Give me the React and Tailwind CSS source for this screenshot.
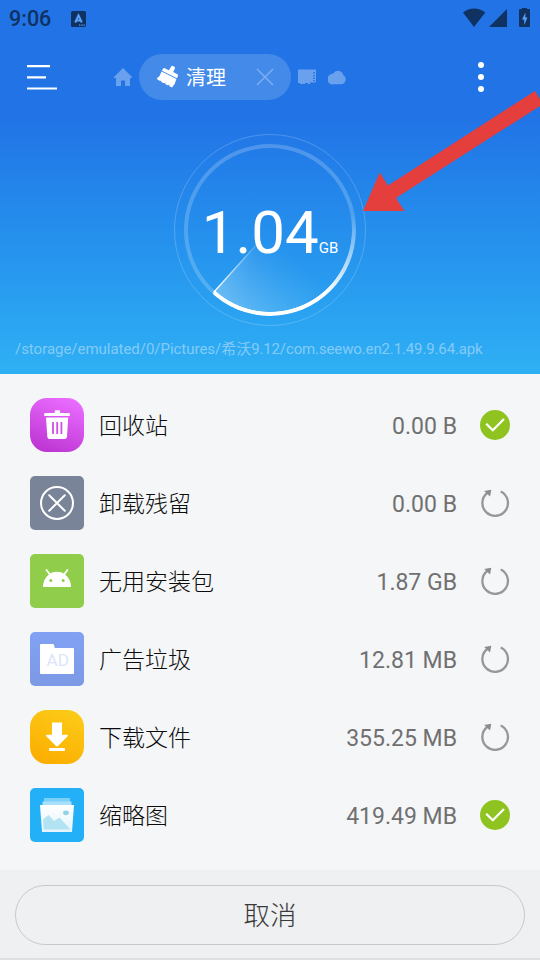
import React from 'react';

const HomeIcon = () => (
  <svg width="18" height="18" viewBox="0 0 18 18" fill="#6aa1ef">
    <path d="M9 0 L18 9 V10 H16 V18 H11 V12.500 H7 V18 H2 V10 H0 V9 Z" />
  </svg>
);

const BroomIcon = () => (
  <svg width="24" height="24" viewBox="0 0 24 24" fill="#fff">
    <path d="M15.200 1.600 q.6-1.100 1.700-.6 l1.500.7 q1 .6 .5 1.700 L17.200 7 L21.400 9.300 q1 .6 .5 1.600 L20.900 13.200 L6 5.800 L7 3.800 q.6-1.100 1.600-.6 L13 5.200 Z" />
    <path d="M5.600 6.600 L20.400 14 Q19.400 18.800 16 22.600 L13 21 L13.600 19.500 L11.800 20.300 L9 18.900 L9.600 17.400 L7.800 18.300 L5 16.800 L5.500 15.400 L4 16 L0.600 13.800 Q4.400 11.200 5.600 6.600 Z" />
  </svg>
);

const SdCardIcon = () => (
  <svg width="18" height="16" viewBox="0 0 18 16">
    <path d="M1 0.5 H17 q1 0 1 1 V12 q0 1.5 -1.5 1.5 H12 V15 H10 V14 H7 V15 H2 V14 H0 V1.5 Q0 .5 1 .5 Z" fill="#6aa1ef" />
    <path d="M15 3h2v1.5h-2z M15 6h2v1.3h-2z M15 8.6h2v1.3h-2z M15 11h2v1h-2z" fill="#2f7ae7" />
  </svg>
);

const CloudIcon = () => (
  <svg width="18" height="16" viewBox="0 0 18 16">
    <path d="M5.5 15.3 A5.2 5.2 0 0 1 3.7 5 A3 3 0 0 1 5.6 4.2 A5.3 5.3 0 0 1 15.2 6 A5 5 0 0 1 13 15.3 Z" fill="#6aa1ef" />
  </svg>
);

const StatusBar = () => (
  <div className="flex h-9 items-center pl-[9px] pr-[9px] text-[#0f3262]">
    <span className="w-[62px] pt-px text-[21.5px] leading-9 font-medium">9:06</span>
    <svg className="mt-px" width="15" height="16" viewBox="0 0 15 16">
      <rect width="15" height="16" rx="1.5" fill="#0f3262" />
      <path d="M4.2 11.500 L7.5 4.300 L10.8 11.500 M5.4 9.400 H9.6" stroke="#5ba0f8" strokeWidth="2" fill="none" />
      <path d="M8 13.6h1.3v1.2h-1.3z M10.3 13.6h1.3v1.2h-1.3z M12.5 13.6h1.3v1.2h-1.3z" fill="#5ba0f8" />
    </svg>
    <div className="ml-auto flex items-center">
      <svg width="68" height="20" viewBox="0 0 68 20" fill="#0f3262">
        <path d="M11 19 L0 4.500 Q5 0.500 11 0.500 T22.300 4.500 Z" />
        <path d="M44 1 V19 H26 Z" />
        <path d="M59 -1h5v2h2q1 0 1 1v16q0 1-1 1h-9q-1 0-1-1V2q0-1 1-1h2z" />
        <path d="M62.500 4.600 L59 11.500 H61.2 V17 L64.500 9.600 H62.3 Z" fill="#5ba0f8" />
      </svg>
    </div>
  </div>
);

const TopBar = () => (
  <div className="flex h-[82px] items-center px-[27px]">
    <svg className="mt-px" width="30" height="26" viewBox="0 0 30 26" fill="#fff">
      <path d="M0 0h23v2.2H0z M0 11.2h19v2.2H0z M0 22.4h30v2.2H0z" />
    </svg>
    <div className="ml-[57px]">
      <HomeIcon />
    </div>
    <div className="ml-[7px] flex h-[46px] w-[152px] items-center rounded-full bg-[#448ae9] pl-[17px] pr-[17px]">
      <BroomIcon />
      <span className="ml-[6px] pt-0.5 text-[20px] leading-none text-white">清理</span>
      <svg className="ml-auto" width="18" height="18" viewBox="0 0 18 18">
        <path d="M1 1 L17 17 M17 1 L1 17" stroke="#7fb0f2" strokeWidth="1.4" />
      </svg>
    </div>
    <div className="ml-[7px]">
      <SdCardIcon />
    </div>
    <div className="ml-3">
      <CloudIcon />
    </div>
    <svg className="ml-auto mr-[29px]" width="6" height="30" viewBox="0 0 6 30" fill="#fff">
      <circle cx="3" cy="3" r="3" />
      <circle cx="3" cy="15" r="3" />
      <circle cx="3" cy="27" r="3" />
    </svg>
  </div>
);

const Gauge = () => (
  <div className="mx-auto mt-4 grid h-48 w-48 place-items-center *:col-start-1 *:row-start-1">
    <div className="h-48 w-48 rounded-full border-[1.5px] border-white/20" />
    <div className="h-[172px] w-[172px] rounded-full border-[4.5px] border-white/20" />
    <div className="h-[168px] w-[168px] rounded-full bg-[conic-gradient(transparent_135deg,rgba(255,255,255,0.32)_222deg,transparent_222deg)] [mask-image:radial-gradient(circle,transparent_10%,black_70%)]" />
    <div className="h-[172px] w-[172px] rounded-full bg-[conic-gradient(transparent_80deg,white_140deg,white_222deg,transparent_222deg)] [mask-image:radial-gradient(circle_closest-side,transparent_81.5px,black_82.2px)]" />
    <svg width="192" height="192" viewBox="0 0 192 192">
      <defs>
        <linearGradient id="hand" gradientUnits="userSpaceOnUse" x1="40" y1="158" x2="84" y2="109">
          <stop offset="0" stopColor="#fff" />
          <stop offset="1" stopColor="#fff" stopOpacity="0.1" />
        </linearGradient>
      </defs>
      <path d="M39.5 158.5 L84 109" stroke="url(#hand)" strokeWidth="1.4" />
    </svg>
    <div className="flex items-baseline pt-[6px] text-white">
      <span className="text-[60px] leading-none">1.04</span>
      <span className="text-[15px] leading-none">GB</span>
    </div>
  </div>
);

const Tile = ({ children }) => (
  <svg width="54" height="54" viewBox="0 0 54 54">{children}</svg>
);

const TrashTile = () => (
  <Tile>
    <defs>
      <linearGradient id="purple" x1="0.7" y1="0" x2="0.3" y2="1">
        <stop offset="0" stopColor="#ea6cff" />
        <stop offset="1" stopColor="#bd35d3" />
      </linearGradient>
    </defs>
    <rect width="54" height="54" rx="17" fill="url(#purple)" />
    <path d="M14.3 15h10.4v-1.8q0-1 1-1h3.4q1 0 1 1V15h9.7v3H14.3z" fill="#fff" />
    <path d="M16 19.5h22.2l-1.2 19.2q-.2 2.3-2.4 2.3H19.7q-2.2 0-2.4-2.3z" fill="#fff" />
    <path d="M23 24v12 M27.2 24v12 M31.4 24v12" stroke="#d04fe5" strokeWidth="1.8" />
  </Tile>
);

const UninstallTile = () => (
  <Tile>
    <rect width="54" height="54" rx="5" fill="#7a8499" />
    <circle cx="27" cy="27" r="16" fill="none" stroke="#fff" strokeWidth="2" />
    <path d="M19.2 19.2 L34.8 34.8 M34.8 19.2 L19.2 34.8" stroke="#fff" strokeWidth="2" strokeLinecap="round" />
  </Tile>
);

const ApkTile = () => (
  <Tile>
    <rect width="54" height="54" rx="5" fill="#90cd4a" />
    <path d="M13 33 A14 15.2 0 0 1 41 33 Z" fill="#fff" />
    <path d="M16.5 16 L20 20.5 M37.5 16 L34 20.5" stroke="#fff" strokeWidth="1.8" strokeLinecap="round" />
    <circle cx="20.8" cy="26.6" r="1.5" fill="#90cd4a" />
    <circle cx="33.2" cy="26.6" r="1.5" fill="#90cd4a" />
  </Tile>
);

const AdTile = () => (
  <Tile>
    <defs>
      <linearGradient id="indigo" x1="0" y1="0" x2="0" y2="1">
        <stop offset="0" stopColor="#82a1f3" />
        <stop offset="1" stopColor="#7c99e5" />
      </linearGradient>
    </defs>
    <rect width="54" height="54" rx="5" fill="url(#indigo)" />
    <path d="M10 13q0-1 1-1h12q1 0 1 1l.8 3H43q1 0 1 1v24q0 1-1 1H11q-1 0-1-1z" fill="#fff" />
    <text x="27.7" y="34" fontSize="17" textAnchor="middle" fill="#dde5fb">AD</text>
  </Tile>
);

const DownloadTile = () => (
  <Tile>
    <defs>
      <linearGradient id="amber" x1="0.7" y1="0" x2="0.3" y2="1">
        <stop offset="0" stopColor="#fcca18" />
        <stop offset="1" stopColor="#fbae00" />
      </linearGradient>
    </defs>
    <rect width="54" height="54" rx="17" fill="url(#amber)" />
    <path d="M22 12.4h10v12.4h5.2q1.3 0.2 .4 1.4L28 36q-1 .9-2 0l-9.700-9.800q-.9-1.200 .4-1.400H22z" fill="#fff" />
    <rect x="19" y="38" width="16" height="3" rx="0.6" fill="#fff" />
  </Tile>
);

const ThumbTile = () => (
  <Tile>
    <defs>
      <linearGradient id="photo" x1="0" y1="0" x2="0" y2="1">
        <stop offset="0" stopColor="#fff" />
        <stop offset="1" stopColor="#e4f4fa" />
      </linearGradient>
    </defs>
    <rect width="54" height="54" rx="5" fill="#23b0f6" />
    <path d="M14 10h26v4H14z" fill="#7bd0f9" />
    <path d="M12.500 13.500h29v4h-29z" fill="#a9e0fb" />
    <path d="M10 17h34l-2 27H12z" fill="url(#photo)" />
    <path d="M13 31.500 L18.500 27 L24 33 L29.500 29.500 L40.500 41.500 H13.800 Z" fill="#b2e3f3" />
    <ellipse cx="36" cy="24.800" rx="2.900" ry="2.400" fill="#8fd3ea" />
  </Tile>
);

const CheckIcon = () => (
  <svg width="30" height="30" viewBox="0 0 30 30">
    <circle cx="15" cy="15" r="15" fill="#8fc31f" />
    <path d="M6.200 13.700 L12.800 20.200 L24 9" fill="none" stroke="#fff" strokeWidth="2.300" />
  </svg>
);

const RefreshIcon = () => (
  <svg width="30" height="30" viewBox="0 0 30 30">
    <path d="M20.700 3.500 A12.800 12.800 0 1 1 7.200 5" fill="none" stroke="#979797" strokeWidth="2.300" />
    <path d="M4.200 3 L11.300 1.800 L10 8.400 Z" fill="#8c8c8c" />
  </svg>
);

const items = [
  { name: '回收站', size: '0.00 B', Icon: TrashTile, done: true },
  { name: '卸载残留', size: '0.00 B', Icon: UninstallTile, done: false },
  { name: '无用安装包', size: '1.87 GB', Icon: ApkTile, done: false },
  { name: '广告垃圾', size: '12.81 MB', Icon: AdTile, done: false },
  { name: '下载文件', size: '355.25 MB', Icon: DownloadTile, done: false },
  { name: '缩略图', size: '419.49 MB', Icon: ThumbTile, done: true },
];

function App() {
  return (
    <div className="relative flex h-[960px] w-[540px] flex-col overflow-hidden bg-[#f5f6f8] font-[Roboto,'Noto_Sans_CJK_SC',sans-serif]">
      <header className="h-[374px] bg-linear-to-b from-[#2274e6] from-32% to-[#2fb0f4]">
        <StatusBar />
        <TopBar />
        <Gauge />
        <p className="mt-[13px] pl-[15px] text-[15px] leading-5 tracking-[-0.03px] whitespace-nowrap text-[#84cbf8]">
          /storage/emulated/0/Pictures/希沃
          <span className="tracking-[-0.13px]">9.12/com.seewo.en2.1.49.9.64.apk</span>
        </p>
      </header>

      <ul className="flex-1 pt-3">
        {items.map(({ name, size, Icon, done }) => (
          <li key={name} className="flex h-[78px] items-center px-[30px]">
            <Icon />
            <span className="ml-[15px] pt-0.5 text-[23px] leading-none font-light text-[#0c0c0c]">{name}</span>
            <span className="mr-[23px] ml-auto pt-0.5 text-[23px] leading-none text-[#707070]">{size}</span>
            {done ? <CheckIcon /> : <RefreshIcon />}
          </li>
        ))}
      </ul>

      <footer className="h-[90px] border-b-2 border-[#dfe0e2] bg-[#eff0f2] px-[15px] pt-[15px]">
        <button className="h-[60px] w-full rounded-full border-[1.5px] border-[#c8c9cb] pt-0.5 text-[26.5px] font-light text-[#3a3a3a]">
          取消
        </button>
      </footer>

      <svg className="absolute top-[90px] left-[362px]" width="178" height="122" viewBox="0 0 178 122">
        <path d="M1 121 L17.700 82.500 L26 95.500 L173 1 L181 14 L34 108 L42.500 121 Z" fill="#e43e3d" />
      </svg>
    </div>
  );
}

export default App;
